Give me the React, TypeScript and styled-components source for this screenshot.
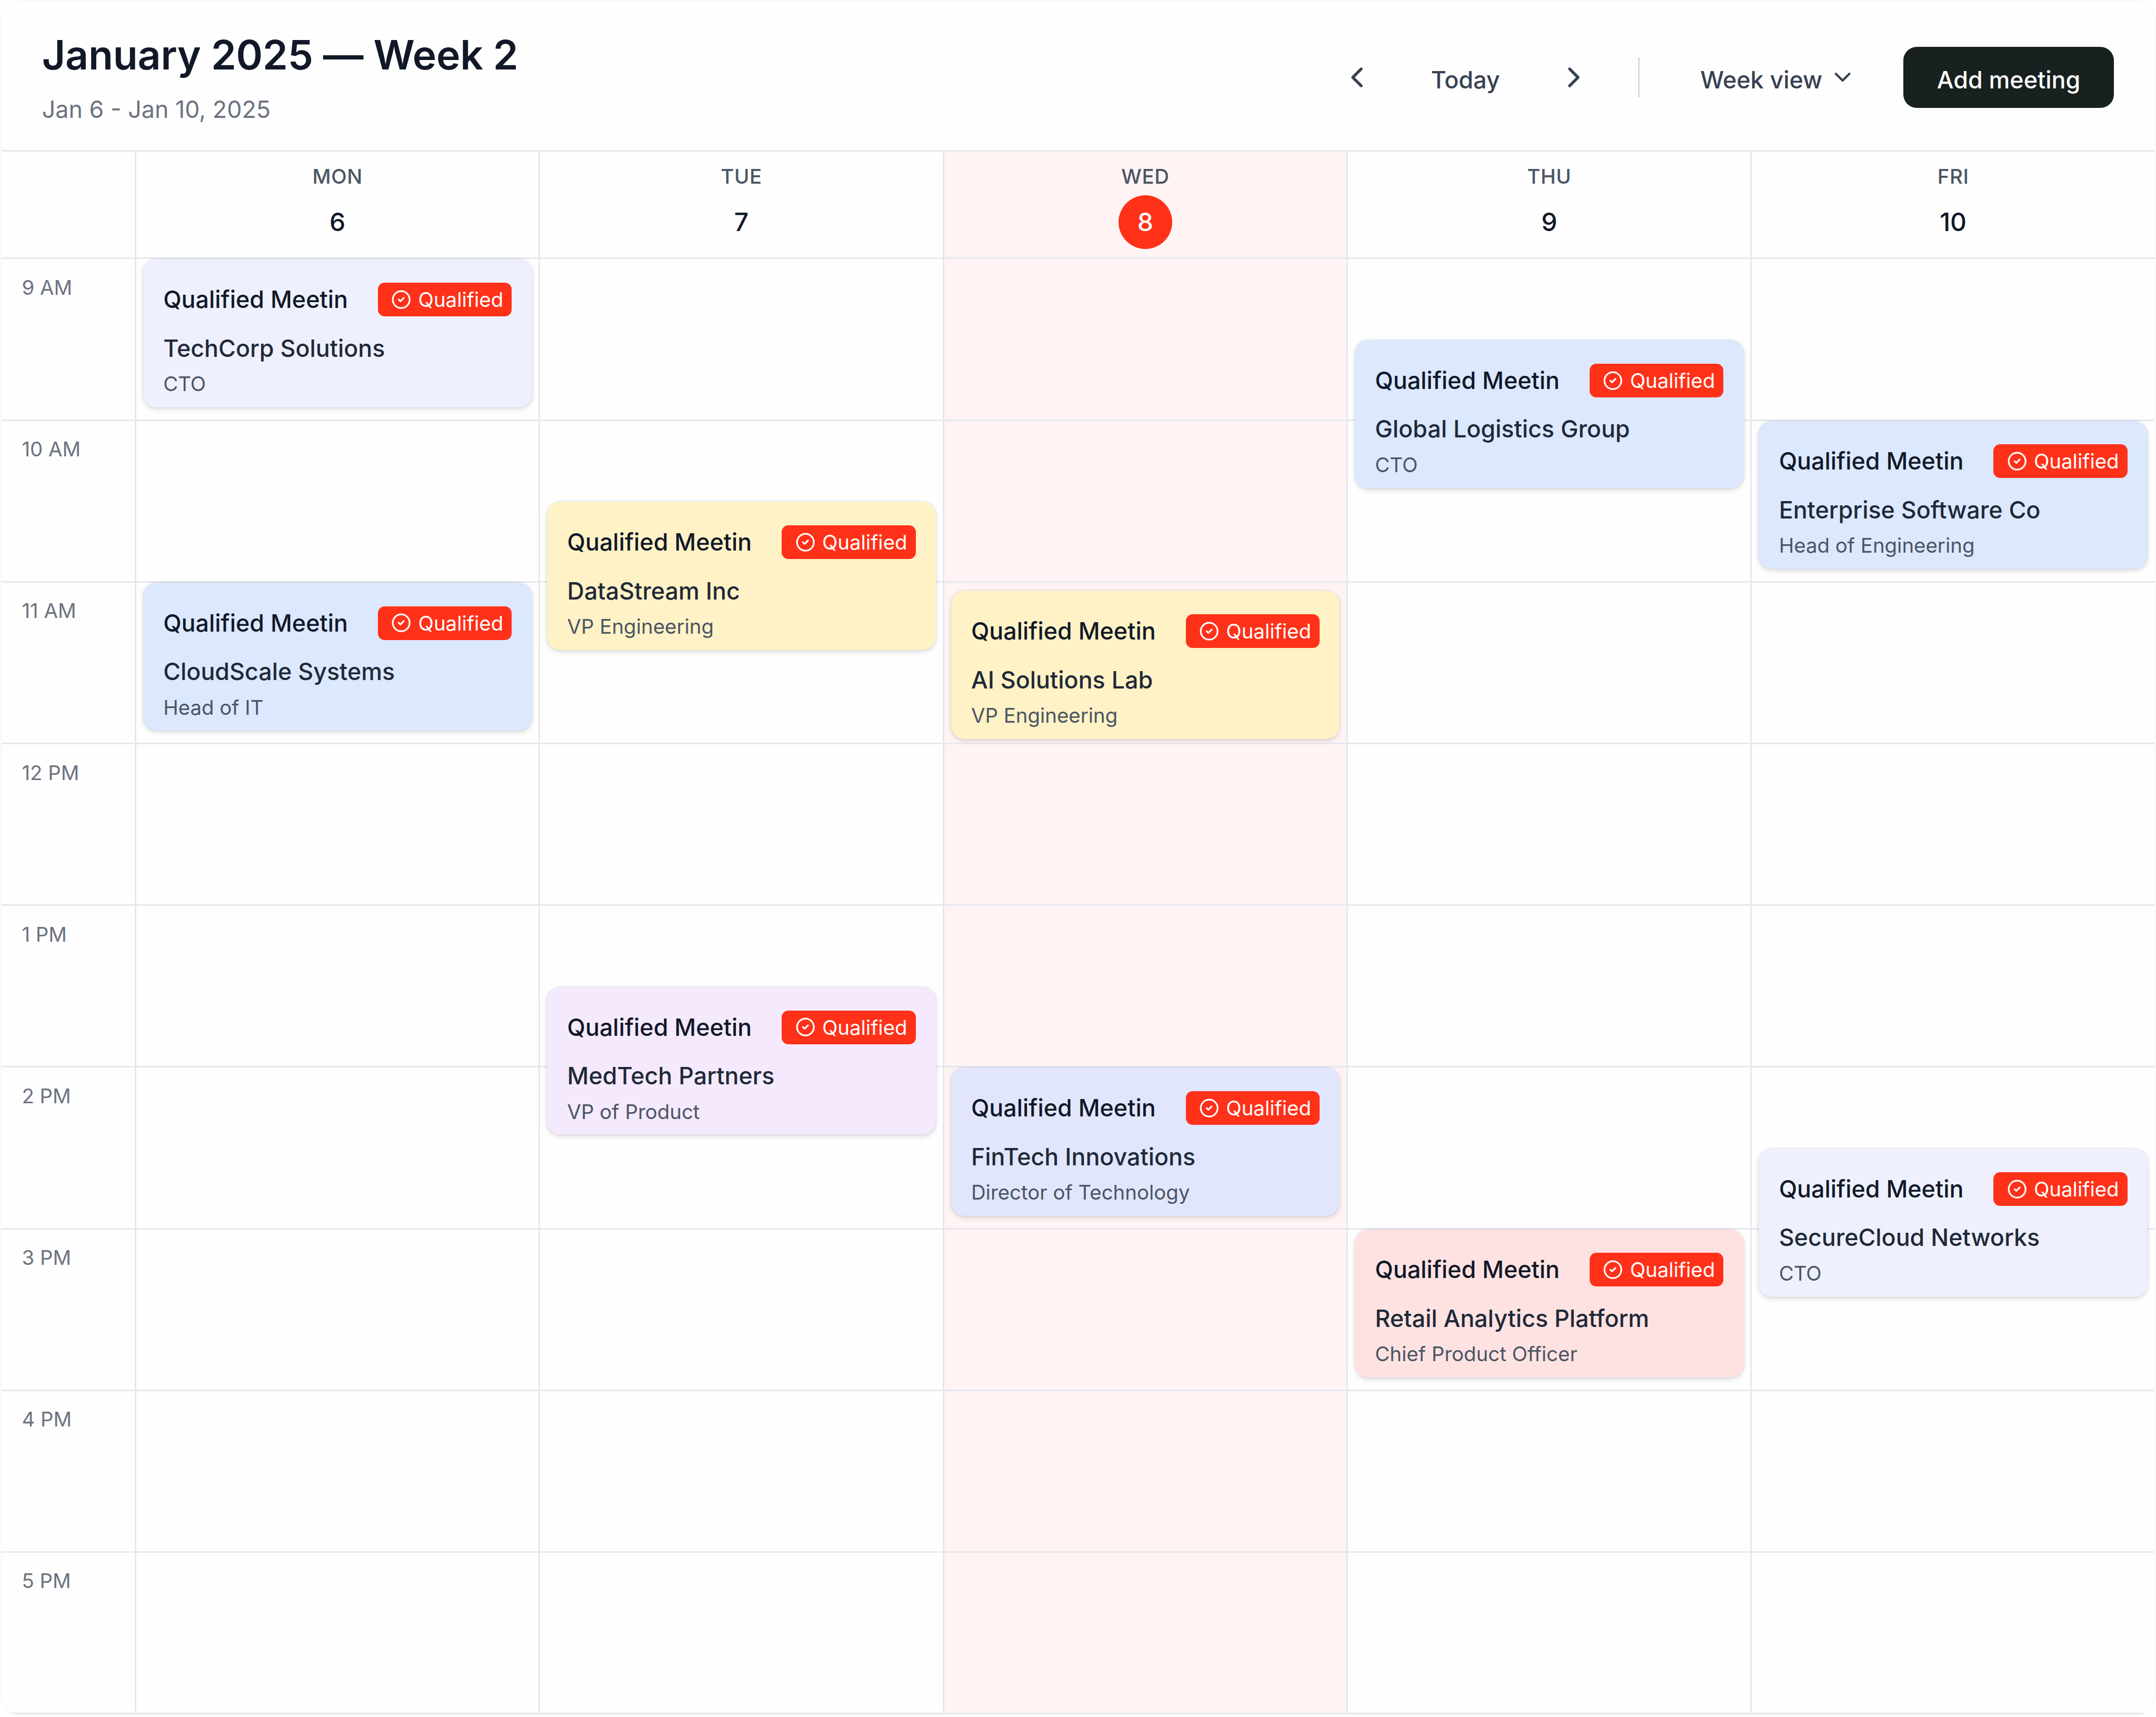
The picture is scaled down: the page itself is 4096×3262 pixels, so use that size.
import styled, { createGlobalStyle } from 'styled-components';
import { ChevronDown, ChevronLeft, ChevronRight, CircleCheck } from 'lucide-react';

const HOUR_HEIGHT = 96;
const HOURS = ['9 AM', '10 AM', '11 AM', '12 PM', '1 PM', '2 PM', '3 PM', '4 PM', '5 PM'];

const TINTS = {
    indigo: '#eef0fe',
    blue: '#dbe8fe',
    amber: '#fef2c6',
    purple: '#f4e9fd',
    periwinkle: '#e1e6fc',
    rose: '#fee2e2',
};

type Tint = keyof typeof TINTS;

interface Meeting {
    start: number;
    company: string;
    role: string;
    tint: Tint;
}

interface Day {
    label: string;
    date: number;
    isToday?: boolean;
    meetings: Meeting[];
}

const DAYS: Day[] = [
    {
        label: 'MON',
        date: 6,
        meetings: [
            { start: 0, company: 'TechCorp Solutions', role: 'CTO', tint: 'indigo' },
            { start: 2, company: 'CloudScale Systems', role: 'Head of IT', tint: 'blue' },
        ],
    },
    {
        label: 'TUE',
        date: 7,
        meetings: [
            { start: 1.5, company: 'DataStream Inc', role: 'VP Engineering', tint: 'amber' },
            { start: 4.5, company: 'MedTech Partners', role: 'VP of Product', tint: 'purple' },
        ],
    },
    {
        label: 'WED',
        date: 8,
        isToday: true,
        meetings: [
            { start: 2.05, company: 'AI Solutions Lab', role: 'VP Engineering', tint: 'amber' },
            { start: 5, company: 'FinTech Innovations', role: 'Director of Technology', tint: 'periwinkle' },
        ],
    },
    {
        label: 'THU',
        date: 9,
        meetings: [
            { start: 0.5, company: 'Global Logistics Group', role: 'CTO', tint: 'blue' },
            { start: 6, company: 'Retail Analytics Platform', role: 'Chief Product Officer', tint: 'rose' },
        ],
    },
    {
        label: 'FRI',
        date: 10,
        meetings: [
            { start: 1, company: 'Enterprise Software Co', role: 'Head of Engineering', tint: 'blue' },
            { start: 5.5, company: 'SecureCloud Networks', role: 'CTO', tint: 'indigo' },
        ],
    },
];

const MeetingCard = ({ meeting }: { meeting: Meeting }) => (
    <Card $tint={meeting.tint} style={{ top: meeting.start * HOUR_HEIGHT }}>
        <CardTop>
            <CardTitle>Qualified Meetin</CardTitle>
            <Badge>
                <CircleCheck size={12} strokeWidth={2} />
                Qualified
            </Badge>
        </CardTop>
        <Company>{meeting.company}</Company>
        <Role>{meeting.role}</Role>
    </Card>
);

export default function App() {
    return (
        <>
            <GlobalStyle />
            <Calendar>
                <Header>
                    <div>
                        <Title>January 2025 — Week 2</Title>
                        <Subtitle>Jan 6 - Jan 10, 2025</Subtitle>
                    </div>
                    <Controls>
                        <NavGroup>
                            <IconButton aria-label="Previous week">
                                <ChevronLeft size={20} />
                            </IconButton>
                            <GhostButton>
                                <ButtonLabel>Today</ButtonLabel>
                            </GhostButton>
                            <IconButton aria-label="Next week">
                                <ChevronRight size={20} />
                            </IconButton>
                        </NavGroup>
                        <Divider />
                        <ViewButton>
                            <ButtonLabel>Week view</ButtonLabel>
                            <ChevronDown size={16} />
                        </ViewButton>
                        <PrimaryButton>
                            <ButtonLabel>Add meeting</ButtonLabel>
                        </PrimaryButton>
                    </Controls>
                </Header>

                <Columns>
                    <HeadCorner />
                    {DAYS.map((day) => (
                        <DayHead key={day.label} $today={day.isToday}>
                            <DayLabel>{day.label}</DayLabel>
                            <DayNumber $today={day.isToday}>{day.date}</DayNumber>
                        </DayHead>
                    ))}

                    <TimeColumn>
                        {HOURS.map((hour) => (
                            <TimeSlot key={hour}>{hour}</TimeSlot>
                        ))}
                    </TimeColumn>
                    {DAYS.map((day) => (
                        <DayColumn key={day.label} $today={day.isToday}>
                            {HOURS.map((hour) => (
                                <HourCell key={hour} />
                            ))}
                            {day.meetings.map((meeting) => (
                                <MeetingCard key={meeting.company} meeting={meeting} />
                            ))}
                        </DayColumn>
                    ))}
                </Columns>
            </Calendar>
        </>
    );
}

const GlobalStyle = createGlobalStyle`
    html, body {
        margin: 0;
        background: #fff;
    }
    #root {
        zoom: 3.2;
        width: 1280px;
    }
    * {
        box-sizing: border-box;
    }
`;

const Calendar = styled.div`
    height: 1019px;
    border: 1px solid #f9f9fb;
    border-radius: 12px;
    background: #fefefe;
    overflow: hidden;
    font-family: Inter, "Liberation Sans", sans-serif;
`;

const Header = styled.header`
    display: flex;
    align-items: center;
    justify-content: space-between;
    padding: 16px 24px 14px;
    border-bottom: 1px solid #e7e7ee;
`;

const Title = styled.h1`
    margin: 0;
    font-size: 24px;
    line-height: 32px;
    font-weight: 600;
    letter-spacing: -0.07px;
    color: #111827;
`;

const Subtitle = styled.p`
    margin: 6px 0 0;
    font-size: 14px;
    line-height: 20px;
    color: #6b7280;
`;

const Controls = styled.div`
    display: flex;
    align-items: center;
    gap: 12px;
`;

const NavGroup = styled.div`
    display: flex;
    align-items: center;
    gap: 12px;
`;

const PlainButton = styled.button`
    display: flex;
    align-items: center;
    height: 36px;
    border: none;
    border-radius: 8px;
    background: transparent;
    color: #374151;
    font-family: inherit;
    font-size: 14px;
    font-weight: 500;
    cursor: pointer;
`;

const ButtonLabel = styled.span`
    padding-top: 3px;
`;

const IconButton = styled(PlainButton)`
    padding: 0 8px;
`;

const GhostButton = styled(PlainButton)`
    padding: 0 14px;
`;

const ViewButton = styled(PlainButton)`
    gap: 4px;
    padding: 0 16px;
`;

const PrimaryButton = styled(PlainButton)`
    padding: 0 20px;
    background: #182120;
    color: #fff;
`;

const Divider = styled.div`
    width: 1px;
    height: 24px;
    margin: 0 8px;
    background: #d9dae2;
`;

const Columns = styled.div`
    display: grid;
    grid-template-columns: 80px repeat(5, 239.8px);
`;

const HeadCorner = styled.div`
    height: 64px;
    border-right: 1px solid #e7e7ee;
    border-bottom: 1px solid #e7e7ee;
`;

const DayHead = styled.div<{ $today?: boolean }>`
    display: flex;
    flex-direction: column;
    align-items: center;
    gap: 3px;
    height: 64px;
    padding-top: 7px;
    border-right: 1px solid #e7e7ee;
    border-bottom: 1px solid #e7e7ee;
    background: ${(props) => (props.$today ? '#fff3f4' : 'transparent')};
`;

const DayLabel = styled.div`
    font-size: 12px;
    line-height: 16px;
    font-weight: 500;
    letter-spacing: 0.2px;
    color: #4b5563;
`;

const DayNumber = styled.div<{ $today?: boolean }>`
    display: flex;
    align-items: center;
    justify-content: center;
    width: 32px;
    height: 32px;
    border-radius: 50%;
    font-size: 15px;
    font-weight: 500;
    background: ${(props) => (props.$today ? '#ff3119' : 'transparent')};
    color: ${(props) => (props.$today ? '#fff' : '#111827')};
`;

const TimeColumn = styled.div`
    border-right: 1px solid #e7e7ee;
`;

const TimeSlot = styled.div`
    height: ${HOUR_HEIGHT}px;
    padding: 8px 12px;
    border-bottom: 1px solid #e7e7ee;
    font-size: 12px;
    line-height: 18px;
    color: #6b7280;
`;

const DayColumn = styled.div<{ $today?: boolean }>`
    position: relative;
    border-right: 1px solid #e7e7ee;
    background: ${(props) => (props.$today ? '#fff3f4' : 'transparent')};
`;

const HourCell = styled.div`
    height: ${HOUR_HEIGHT}px;
    border-bottom: 1px solid #e7e7ee;
`;

const Card = styled.div<{ $tint: Tint }>`
    position: absolute;
    left: 4px;
    right: 4px;
    height: 88px;
    padding: 12px 12px 0;
    border-radius: 8px;
    background: ${(props) => TINTS[props.$tint]};
    box-shadow: 0 1px 3px rgba(0, 0, 0, 0.12), 0 0 1px rgba(0, 0, 0, 0.12);
`;

const CardTop = styled.div`
    display: flex;
    align-items: center;
    justify-content: space-between;
    height: 24px;
`;

const CardTitle = styled.div`
    font-size: 14px;
    font-weight: 500;
    color: #111827;
`;

const Badge = styled.span`
    display: flex;
    align-items: center;
    gap: 4px;
    height: 20px;
    padding: 0 5px 0 8px;
    border-radius: 4px;
    background: #ff3119;
    color: #fff;
    font-size: 12px;
    font-weight: 400;
`;

const Company = styled.div`
    margin-top: 6px;
    font-size: 14px;
    line-height: 22px;
    font-weight: 500;
    color: #1f2937;
`;

const Role = styled.div`
    font-size: 12px;
    line-height: 20px;
    color: #4b5563;
`;
